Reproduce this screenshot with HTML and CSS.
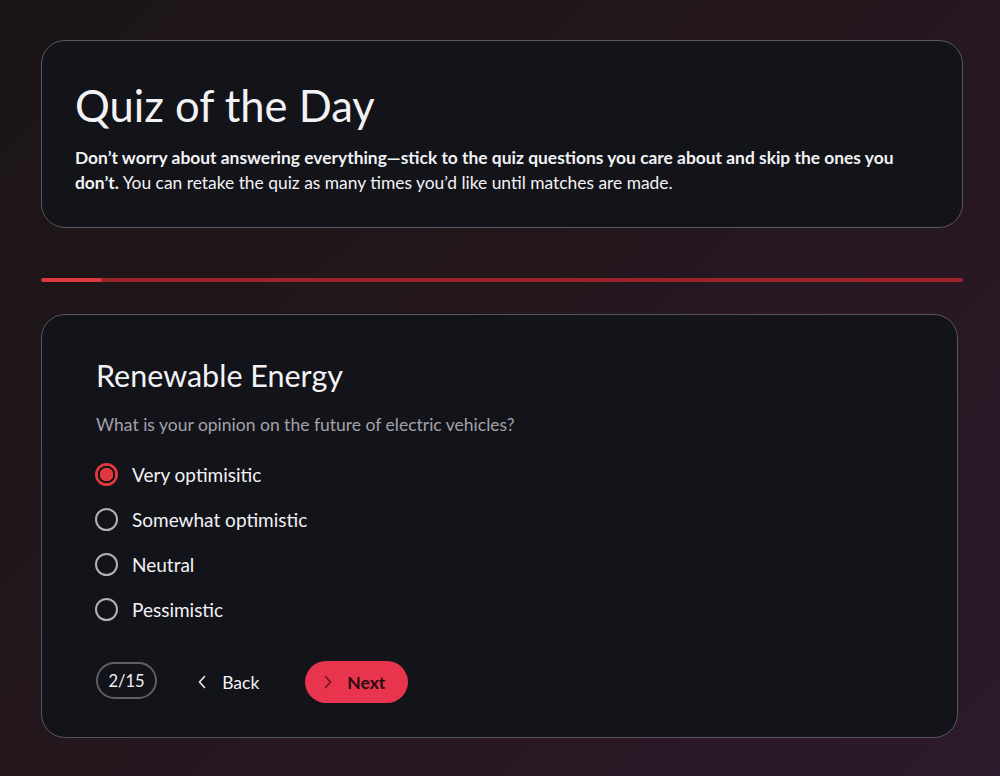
FILE: index.html
```html
<!DOCTYPE html>
<html lang="en">
<head>
<meta charset="utf-8">
<title>Quiz of the Day</title>
<link rel="stylesheet" href="styles.css">
</head>
<body>
<main class="page">
  <section class="intro card">
    <h1 class="intro-title">Quiz of the Day</h1>
    <p class="intro-text"><strong>Don’t worry about answering everything—stick to the quiz questions you care about and skip the ones you don’t.</strong> You can retake the quiz as many times you’d like until matches are made.</p>
  </section>

  <div class="progress"><div class="progress-fill" style="width:6.6%"></div></div>

  <section class="question card">
    <h2 class="q-topic">Renewable Energy</h2>
    <p class="q-text">What is your opinion on the future of electric vehicles?</p>
    <ul class="options">
      <li class="option selected"><span class="radio"></span><span class="label">Very optimisitic</span></li>
      <li class="option"><span class="radio"></span><span class="label">Somewhat optimistic</span></li>
      <li class="option"><span class="radio"></span><span class="label">Neutral</span></li>
      <li class="option"><span class="radio"></span><span class="label">Pessimistic</span></li>
    </ul>
    <div class="nav">
      <span class="counter">2/15</span>
      <button class="btn back"><svg class="chev" viewBox="0 0 8 14" width="8" height="14"><path d="M6.5 1.5 L1.5 7 L6.5 12.5" fill="none" stroke="currentColor" stroke-width="1.5" stroke-linecap="round" stroke-linejoin="round"/></svg>Back</button>
      <button class="btn next"><svg class="chev" viewBox="0 0 8 14" width="8" height="14"><path d="M1.5 1.5 L6.5 7 L1.5 12.5" fill="none" stroke="currentColor" stroke-width="1.5" stroke-linecap="round" stroke-linejoin="round"/></svg>Next</button>
    </div>
  </section>
</main>
</body>
</html>
```

FILE: styles.css
```css
* { box-sizing: border-box; }
html, body { margin: 0; height: 100%; }
body {
  font-family: Lato, "Open Sans", sans-serif;
  color: #f2f2f4;
  background: linear-gradient(135deg, #1b1517 0%, #22161b 40%, #2a1825 75%, #2c1a2c 100%);
  min-height: 776px;
}
.page {
  padding: 40px 37px 0 41px;
  display: flex;
  flex-direction: column;
}
.card {
  background: #13131a;
  border: 1px solid #5a5660;
  border-radius: 24px;
}
.intro {
  padding: 39px 33px 34px 33px;
  height: 188px;
}
.intro-title {
  margin: 0;
  font-size: 43.5px;
  font-weight: 400;
  line-height: 50px;
  letter-spacing: 0;
}
.intro-text {
  margin: 15px 0 0;
  font-size: 17.4px;
  line-height: 25px;
  max-width: 850px;
}
.intro-text strong { font-weight: 700; }

.progress {
  margin-top: 50px;
  height: 4px;
  border-radius: 2px;
  background: #9a2428;
  overflow: hidden;
}
.progress-fill {
  height: 100%;
  background: #e0383e;
  border-radius: 2px;
}

.question {
  margin-top: 32px;
  margin-right: 5px;
  padding: 42px 54px 33px;
  height: 424px;
}
.q-topic {
  margin: 0;
  font-size: 30.5px;
  font-weight: 400;
  line-height: 36px;
}
.q-text {
  margin: 21px 0 0;
  color: #a3a2aa;
  font-size: 17.5px;
  line-height: 22px;
}
.options {
  list-style: none;
  margin: 27px 0 0;
  padding: 0;
  display: flex;
  flex-direction: column;
  gap: 22px;
}
.option {
  display: flex;
  align-items: center;
  gap: 14px;
  font-size: 19px;
  line-height: 23px;
}
.radio {
  width: 23px;
  height: 23px;
  border-radius: 50%;
  border: 2px solid #b3b1b8;
  flex: none;
  margin-left: -1px;
}
.option.selected .radio {
  border-color: #e0383e;
  background: radial-gradient(circle, #e0383e 0 6.5px, #13131a 7px 8.5px, #e0383e 9px);
}
.nav {
  margin-top: 40px;
  display: flex;
  align-items: center;
}
.counter {
  border: 2px solid #5f5e64;
  border-radius: 20px;
  height: 37px;
  padding: 0 10.5px;
  display: inline-flex;
  align-items: center;
  font-size: 16.5px;
  margin-top: -3px;
}
.btn {
  font-family: inherit;
  border: none;
  background: none;
  color: #f2f2f4;
  font-size: 17.5px;
  display: inline-flex;
  align-items: center;
  cursor: pointer;
}
.back {
  margin-left: 41px;
  gap: 16px;
  padding: 0;
}
.next {
  margin-left: 46px;
  background: #e8344c;
  color: #2a0c12;
  font-weight: 700;
  height: 42px;
  border-radius: 21px;
  padding: 0 23px 0 19px;
  gap: 15px;
}
.next .chev { color: #6a1620; }
```
